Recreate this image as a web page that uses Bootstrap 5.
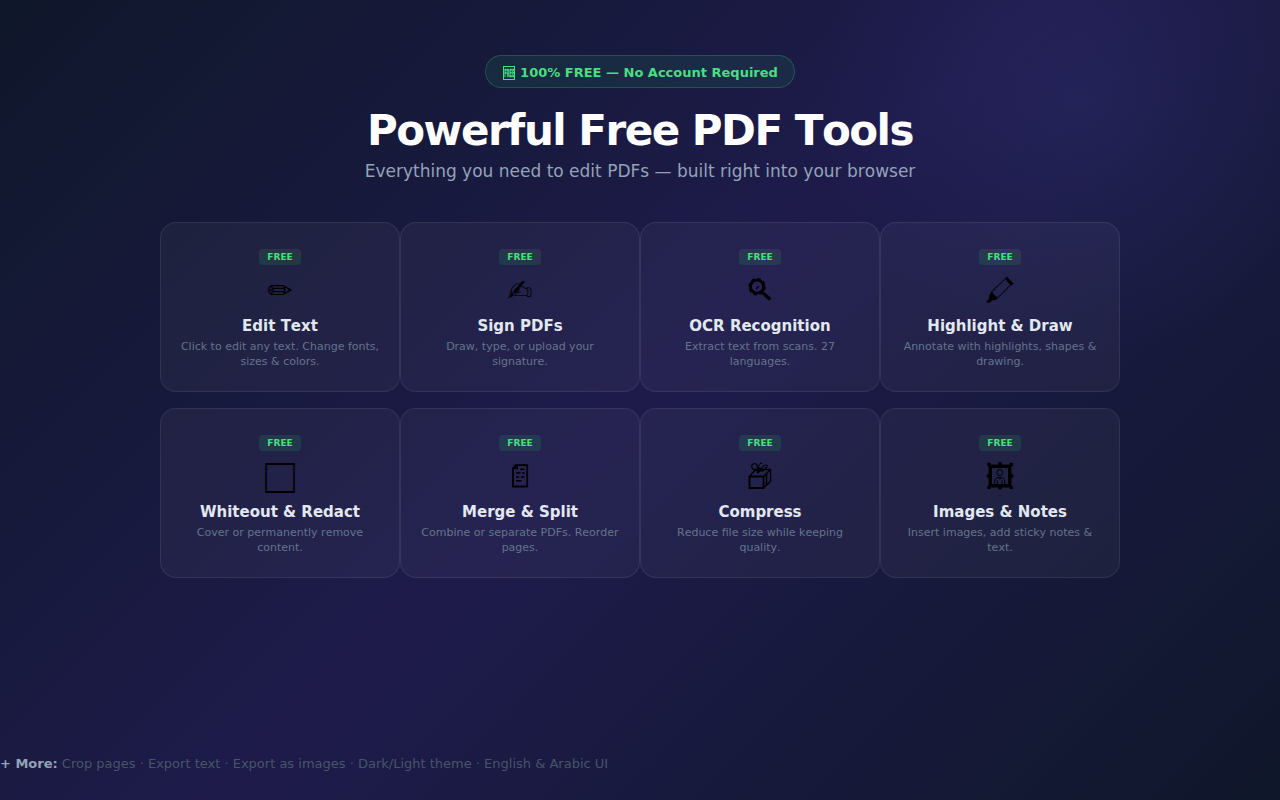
<!DOCTYPE html>
<html lang="en">
<head>
    <meta charset="UTF-8">
    <title>Powerful Free PDF Tools</title>
    <link href="https://cdn.jsdelivr.net/npm/bootstrap@5.3.0/dist/css/bootstrap.min.css" rel="stylesheet">
    <style>
        /* soft glow in the top right corner over the diagonal gradient */
        body {
            height: 800px;
            overflow: hidden;
            font-family: "DejaVu Sans", sans-serif;
            font-kerning: none;
            background:
                radial-gradient(circle 260px at 1080px 100px, rgba(99, 102, 241, .1) 0%, transparent 100%),
                linear-gradient(135deg, #0f172a 0%, #1e1b4b 50%, #0f172a 100%);
            color: #fff;
        }
        .page {
            height: 800px;
            padding-top: 55px;
        }
        .free-pill {
            padding: 7px 16px 5px;
            font-size: 13px;
            line-height: 19px;
            color: #4ade80;
            background: rgba(34, 197, 94, .1);
            border: 1px solid rgba(34, 197, 94, .3);
        }
        .free-pill svg {
            width: 13.5px;
            height: 14px;
            vertical-align: -3px;
        }
        h1 {
            margin: 18px 0 5px;
            font-size: 42px;
            line-height: 50px;
            letter-spacing: -1.5px;
        }
        .tagline {
            margin: 0;
            font-size: 17px;
            line-height: 20px;
            color: #94a3b8;
        }
        .tools {
            width: 960px;
            margin-top: 41px;
            row-gap: 16px;
        }
        .tool {
            height: 170px;
            padding: 26px 16px 0;
            background: rgba(255, 255, 255, .04);
            border: 1px solid rgba(255, 255, 255, .08);
            border-radius: 16px;
        }
        .tag {
            padding: 2px 8px;
            font-size: 9px;
            line-height: 12px;
            color: #4ade80;
            background: rgba(34, 197, 94, .15);
            border-radius: 4px;
        }
        .glyph {
            height: 38px;
            margin: 7px 0;
            font-size: 30px;
            line-height: 38px;
            color: #000;
        }
        .glyph svg {
            display: block;
            width: 40px;
            height: 38px;
            fill: none;
            stroke: #000;
        }
        .tool h2 {
            margin: 0 0 4px;
            font-size: 15px;
            line-height: 18px;
            color: #e2e8f0;
        }
        .tool p {
            margin: 0;
            font-size: 11px;
            line-height: 15.4px;
            color: #64748b;
        }
        .more {
            margin: auto 0 28px;
            font-size: 13px;
            font-kerning: normal;
            line-height: 16px;
            color: #475569;
        }
        .more strong {
            color: #94a3b8;
        }
    </style>
</head>
<body>

<div class="page d-flex flex-column align-items-center text-center">
    <div class="free-pill rounded-pill fw-bold"><svg viewBox="0 0 13.5 14"><rect x="1.5" y=".5" width="11" height="13" fill="none" stroke="#4ade80"/><text transform="translate(2.3 11) scale(.33 1)" font-size="11" fill="#4ade80" stroke="#4ade80" stroke-width=".5">FREE</text></svg> 100% FREE — No Account Required</div>
    <h1 class="fw-bold">Powerful Free PDF Tools</h1>
    <p class="tagline">Everything you need to edit PDFs — built right into your browser</p>

    <div id="tools" class="tools row g-0"></div>

    <div class="more align-self-start"><strong>+ More:</strong> Crop pages · Export text · Export as images · Dark/Light theme · English &amp; Arabic UI</div>
</div>

<script>
    const icons = {
        search: `<svg viewBox="0 0 40 38">
            <circle cx="17" cy="14.7" r="6.5" stroke-width="2.8"/>
            <circle cx="17" cy="14.7" r="8" stroke-width="1.5" stroke-dasharray="3.6 2.7"/>
            <path d="M22 20l2.5 2.5" stroke-width="2.6"/>
            <path d="M23.5 21.5l6.8 6" stroke-width="3.4"/>
            <path d="M16.2 17l2.4-2.8" stroke-width="1.5"/></svg>`,
        crayon: `<svg viewBox="0 0 40 38">
            <path d="M25.5 6.5L11.5 20M31 12.5L17.5 26" stroke-width="1.3" stroke-dasharray="1.4 .7"/>
            <path d="M26.5 4.3l7 7.2-2 2-2.3-1.6-3.7-4.6z" fill="#000" stroke="none"/>
            <path d="M11.8 18.8l1.5 3.2 4.7 4-2 2-3.5.3-2.500 2.400H7l-.3-1.800L9 26.500l.4-3.500z" fill="#000" stroke="none"/></svg>`,
        page: `<svg viewBox="0 0 40 38">
            <path d="M16 7.2h11.2v21.3H13V10.400z" stroke-width="1.800"/>
            <path d="M12.200 11.200V9.800l3.500-3.500H18v4.900z" fill="#000" stroke="none"/>
            <path d="M20.300 11.300h4M16 15h4.500M22 15h2.500M16 19h3M21 19h3.500M16 22.800h5.500" stroke-width="1.600"/></svg>`,
        gift: `<svg viewBox="0 0 40 38">
            <path d="M9.500 18.500h14v11.500h-14z" stroke-width="1.800"/>
            <path d="M9.500 18.500l6-7M23.500 18.500l7-7M23.500 30l7-6.500v-12H25" stroke-width="1.400"/>
            <path d="M26.500 15.500v11.500" stroke-width="1.600"/>
            <path d="M19 12c-3 .5-7-.5-7.300-3.200C11.500 5.500 15.500 4.500 17 7.500z" stroke-width="1.200"/>
            <path d="M19 12c-1-4 0-6.500 3-6.800M21 11.500c1-3.500 4-5.500 6.500-3.500-1.500 2.500-4 3.500-6.500 3.500" stroke-width="1.300" stroke-dasharray="2.500 .8"/>
            <path d="M15.500 11l3-2 2.500 1.500 4.500 1-2 2h-3l-3 2.500-1-2.500z" fill="#000" stroke="none"/></svg>`,
        picture: `<svg viewBox="0 0 40 38">
            <rect x="10.300" y="8.300" width="19.500" height="19.500" stroke-width="3.400"/>
            <path d="M9 6.500h.01M20 6h.01M31.300 6.500h.01M8.500 18h.01M31.800 18h.01M9 29.300h.01M20 29.700h.01M31.300 29.300h.01" stroke-width="3.800" stroke-linecap="round"/>
            <circle cx="19.800" cy="14.600" r="3" stroke-width="1"/>
            <path d="M14.800 26.500v-3.500c0-2 2-3.500 3.500-3.500h3c1.500 0 3.500 1.500 3.500 3.500v3.500M17.500 22.500v4M22 22.500v4M18 19.500l1.800 1.800 1.800-1.800" stroke-width="1"/></svg>`
    };

    // the first two and the square are plain text glyphs
    const tools = [
        ["✏&#xFE0E;", "Edit Text", "Click to edit any text. Change fonts, sizes &amp; colors."],
        ["✍&#xFE0E;", "Sign PDFs", "Draw, type, or upload your signature."],
        [icons.search, "OCR Recognition", "Extract text from scans. 27 languages."],
        [icons.crayon, "Highlight &amp; Draw", "Annotate with highlights, shapes &amp; drawing."],
        ["⬜&#xFE0E;", "Whiteout &amp; Redact", "Cover or permanently remove content."],
        [icons.page, "Merge &amp; Split", "Combine or separate PDFs. Reorder pages."],
        [icons.gift, "Compress", "Reduce file size while keeping quality."],
        [icons.picture, "Images &amp; Notes", "Insert images, add sticky notes &amp; text."]
    ];

    let html = "";
    tools.forEach(([icon, title, text]) => {
        html += `<div class="col-3">
                    <div class="tool d-flex flex-column align-items-center">
                        <span class="tag fw-bold">FREE</span>
                        <div class="glyph">${icon}</div>
                        <h2 class="fw-bold">${title}</h2>
                        <p>${text}</p>
                    </div>
                 </div>`;
    });
    document.getElementById("tools").innerHTML = html;
</script>

<script src="https://cdn.jsdelivr.net/npm/bootstrap@5.3.0/dist/js/bootstrap.bundle.min.js"></script>
</body>
</html>
